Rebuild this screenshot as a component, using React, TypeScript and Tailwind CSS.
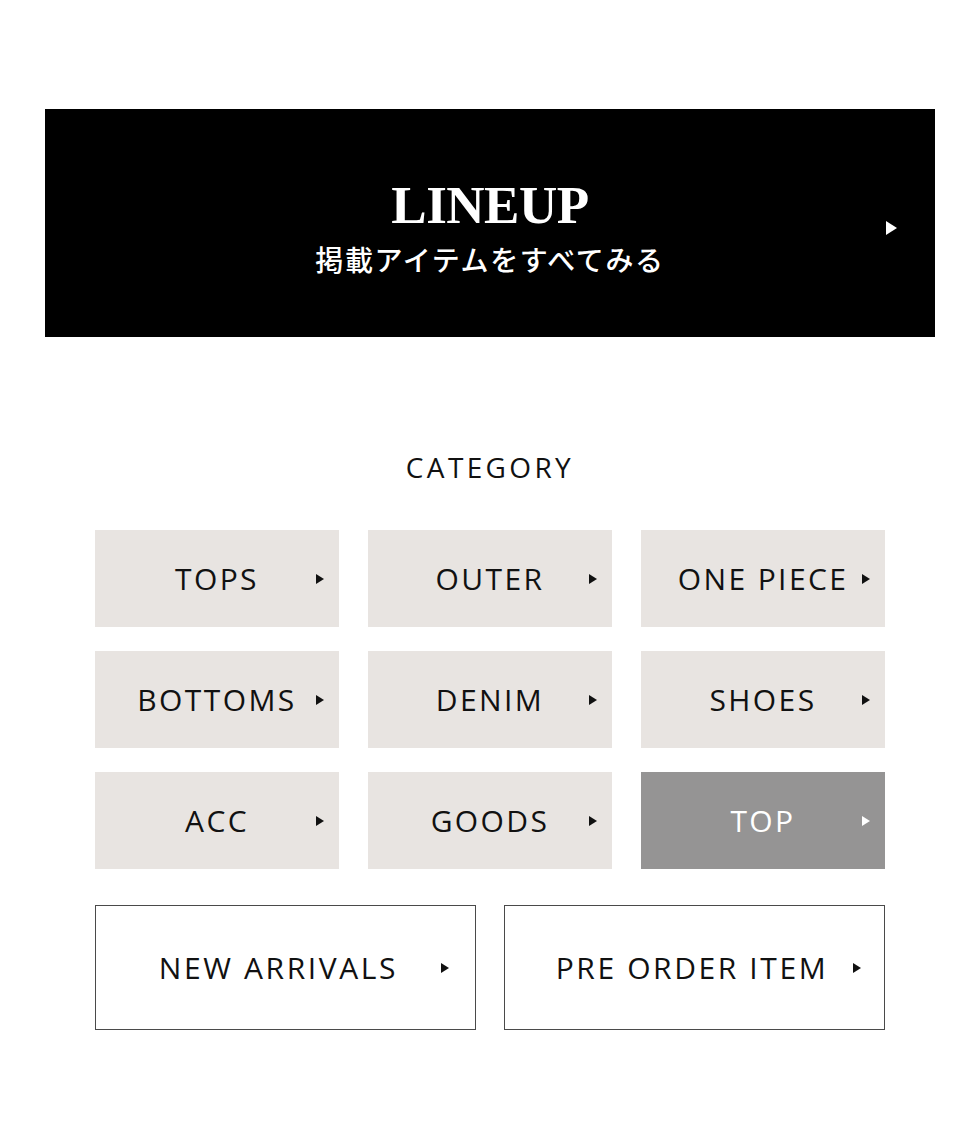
import React from 'react';

const sans = { fontFamily: '"Open Sans", "Liberation Sans", sans-serif' };

function Arrow({ className = '', size = 'sm' }: { className?: string; size?: 'sm' | 'lg' }) {
  const w = size === 'lg' ? 11 : 8;
  const h = size === 'lg' ? 14 : 10;
  return (
    <svg width={w} height={h} viewBox={`0 0 ${w} ${h}`} className={className}>
      <polygon points={`0,0 ${w},${h / 2} 0,${h}`} fill="currentColor" />
    </svg>
  );
}

const categories = [
  { label: 'TOPS' },
  { label: 'OUTER' },
  { label: 'ONE PIECE' },
  { label: 'BOTTOMS' },
  { label: 'DENIM' },
  { label: 'SHOES' },
  { label: 'ACC' },
  { label: 'GOODS' },
  { label: 'TOP', active: true },
];

export default function App() {
  return (
    <div className="w-[980px] h-[1140px] bg-white pt-[109px] px-[45px]">
      {/* lineup banner */}
      <a className="relative flex flex-col items-center justify-center h-[228px] bg-black text-white pt-[6px]">
        <div
          className="text-[53px] leading-none font-bold tracking-[-0.5px]"
          style={{ fontFamily: '"Liberation Serif", "Noto Sans CJK JP", serif' }}
        >
          LINEUP
        </div>
        <div
          className="mt-[13px] text-[28px] leading-none font-medium tracking-[1.6px]"
          style={{ fontFamily: '"Noto Sans CJK JP", serif' }}
        >
          掲載アイテムをすべてみる
        </div>
        <Arrow size="lg" className="absolute right-[38px] top-[112px]" />
      </a>

      {/* category */}
      <div className="px-[50px]">
        <h2
          className="mt-[116px] text-center text-[28px] leading-none tracking-[0.12em] text-[#111]"
          style={sans}
        >
          CATEGORY
        </h2>

        <div className="mt-[49px] grid grid-cols-3 gap-x-[29px] gap-y-[24px]">
          {categories.map((c) => (
            <a
              key={c.label}
              className={`relative flex items-center justify-center h-[97px] ${
                c.active ? 'bg-[#959494] text-white' : 'bg-[#e8e4e1] text-[#111]'
              }`}
            >
              <span className="text-[30px] leading-none tracking-[2.4px]" style={sans}>
                {c.label}
              </span>
              <Arrow className="absolute right-[15px] top-[44px]" />
            </a>
          ))}
        </div>

        <div className="mt-[36px] grid grid-cols-2 gap-x-[28px]">
          <a className="relative flex items-center justify-center h-[125px] border border-[#4a4a4a] text-[#111] pr-[14px]">
            <span className="text-[30px] leading-none tracking-[2.6px]" style={sans}>
              NEW ARRIVALS
            </span>
            <Arrow className="absolute right-[26px] top-[57px]" />
          </a>
          <a className="relative flex items-center justify-center h-[125px] border border-[#4a4a4a] text-[#111] pr-[5px]">
            <span className="text-[30px] leading-none tracking-[2.6px]" style={sans}>
              PRE ORDER ITEM
            </span>
            <Arrow className="absolute right-[23px] top-[57px]" />
          </a>
        </div>
      </div>
    </div>
  );
}
